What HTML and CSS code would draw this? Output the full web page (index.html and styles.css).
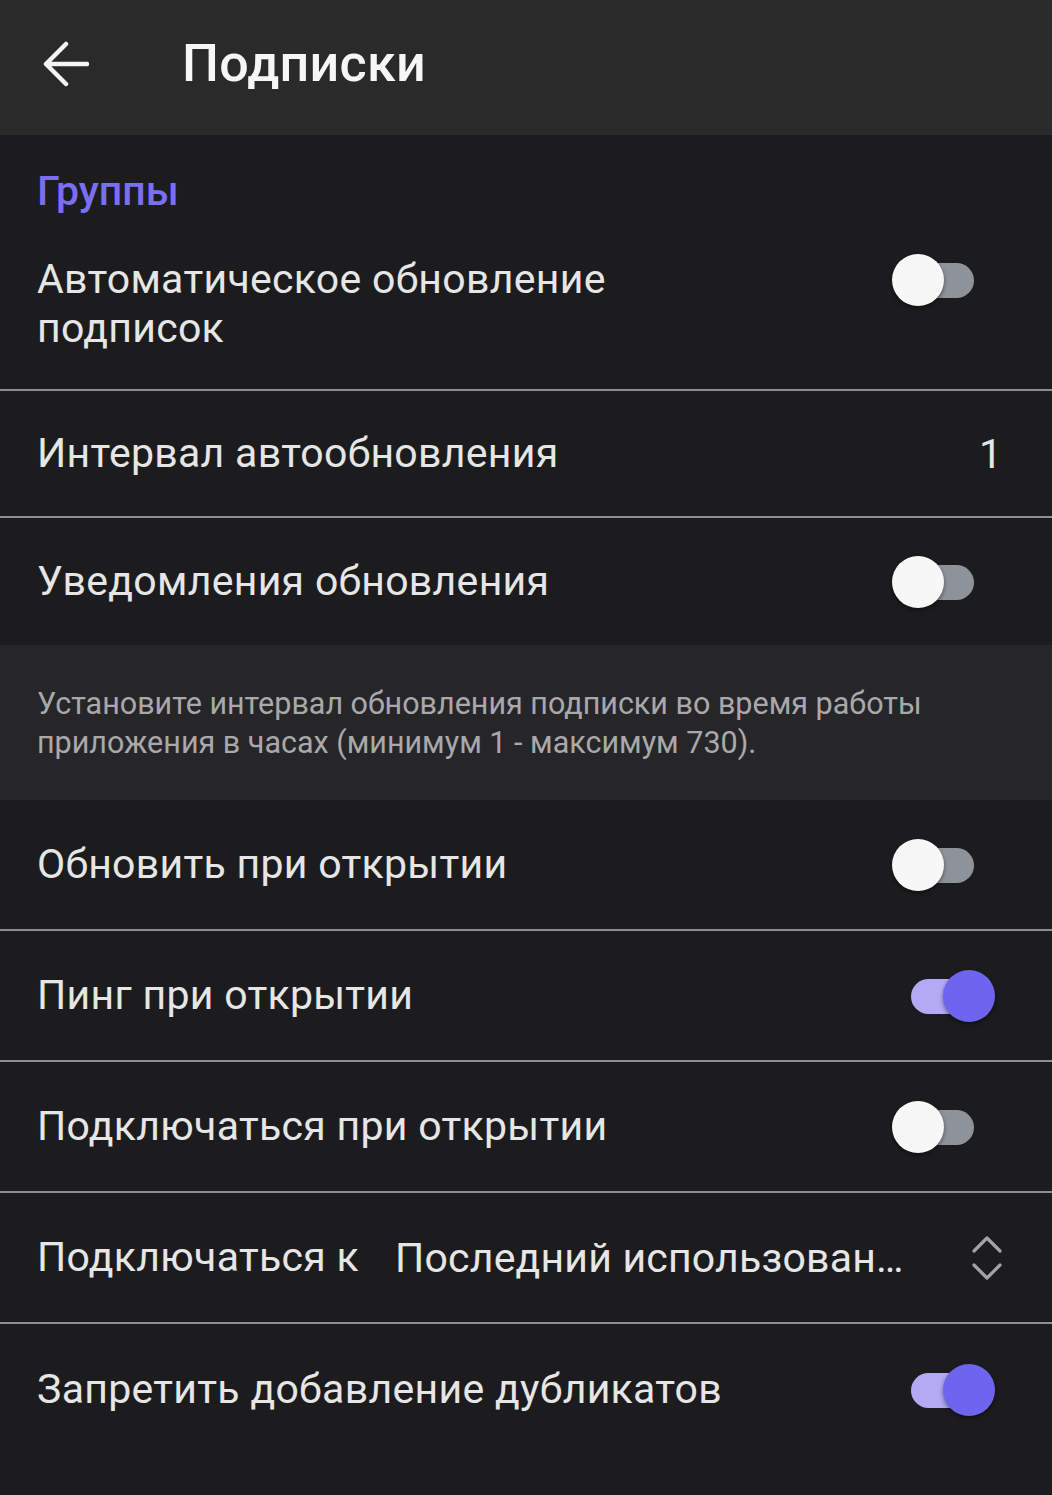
FILE: index.html
```html
<!DOCTYPE html>
<html lang="ru">
<head>
<meta charset="utf-8">
<title>Подписки</title>
<link rel="stylesheet" href="styles.css">
</head>
<body>
<header class="appbar">
  <svg class="back" width="46" height="46" viewBox="0 0 46 46" aria-hidden="true">
    <path d="M3 23 H44 M23 3 L3 23 L23 43" fill="none" stroke="#f4f4f4" stroke-width="4.5" stroke-linecap="round" stroke-linejoin="round"/>
  </svg>
  <h1 class="title">Подписки</h1>
</header>

<main class="content">
  <section class="group group-top">
    <div class="group-title">Группы</div>

    <div class="row row-first divided">
      <div class="label">Автоматическое обновление<br>подписок</div>
      <div class="switch switch-top"><span class="track"></span><span class="thumb"></span></div>
    </div>

    <div class="row divided">
      <div class="label">Интервал автообновления</div>
      <div class="value">1</div>
    </div>

    <div class="row">
      <div class="label">Уведомления обновления</div>
      <div class="switch"><span class="track"></span><span class="thumb"></span></div>
    </div>
  </section>

  <div class="hint">Установите интервал обновления подписки во время работы приложения в часах (минимум 1 - максимум 730).</div>

  <section class="group group-bottom">
    <div class="row divided">
      <div class="label">Обновить при открытии</div>
      <div class="switch"><span class="track"></span><span class="thumb"></span></div>
    </div>

    <div class="row divided">
      <div class="label">Пинг при открытии</div>
      <div class="switch on"><span class="track"></span><span class="thumb"></span></div>
    </div>

    <div class="row divided">
      <div class="label">Подключаться при открытии</div>
      <div class="switch"><span class="track"></span><span class="thumb"></span></div>
    </div>

    <div class="row divided">
      <div class="label select-label">Подключаться к</div>
      <div class="select-value">Последний использован…</div>
      <svg class="chevrons" width="32" height="50" viewBox="0 0 32 50" aria-hidden="true">
        <path d="M3 18 L16 5 L29 18 M3 32 L16 45 L29 32" fill="none" stroke="#a3a3a6" stroke-width="3.2" stroke-linecap="round" stroke-linejoin="round"/>
      </svg>
    </div>

    <div class="row">
      <div class="label">Запретить добавление дубликатов</div>
      <div class="switch on"><span class="track"></span><span class="thumb"></span></div>
    </div>
  </section>
</main>
</body>
</html>
```

FILE: styles.css
```css
* {
  box-sizing: border-box;
}

html, body {
  margin: 0;
  padding: 0;
}

body {
  background: #1c1c1e;
  font-family: Roboto, "Noto Sans", "Liberation Sans", sans-serif;
  color: #e8e8e8;
  width: 1052px;
  min-height: 1495px;
}

.appbar {
  height: 135px;
  background: #2a2a2b;
  display: flex;
  align-items: center;
  padding: 0 0 8px 43px;
}

.back {
  display: block;
}

.title {
  margin: 0 0 0 93px;
  font-size: 52px;
  font-weight: 500;
  color: #f6f6f6;
  letter-spacing: 0.3px;
}

.group-title {
  padding: 32px 37px 0;
  height: 76px;
  line-height: 48px;
  font-size: 41px;
  font-weight: 500;
  color: #7a6ff2;
}

.row {
  display: flex;
  align-items: center;
  padding: 0 57px 0 37px;
}

.group-top .row {
  min-height: 127px;
}

.group-bottom .row {
  min-height: 131px;
}

.group-top .row-first {
  min-height: 180px;
  padding-top: 8px;
}

.divided {
  border-bottom: 2px solid #8d8d90;
}

.label {
  flex: 1;
  font-size: 41px;
  line-height: 49px;
  color: #e6e6e6;
  letter-spacing: 0.3px;
}

.value {
  font-size: 41px;
  color: #e6e6e6;
  margin-right: -7px;
}

.hint {
  background: #262628;
  height: 155px;
  padding: 0 37px;
  display: flex;
  align-items: center;
  font-size: 30.5px;
  line-height: 39px;
  color: #a9a9ab;
}

.switch {
  position: relative;
  width: 103px;
  height: 52px;
  flex: none;
}

.switch-top {
  align-self: flex-start;
  margin-top: 35px;
}

.switch .track {
  position: absolute;
  left: 19px;
  top: 9px;
  width: 63px;
  height: 35px;
  border-radius: 18px;
  background: #8e939a;
}

.switch .thumb {
  position: absolute;
  left: 0;
  top: 0;
  width: 52px;
  height: 52px;
  border-radius: 50%;
  background: #f7f7f7;
  box-shadow: 0 2px 4px rgba(0, 0, 0, 0.45);
}

.switch.on .track {
  background: #b2abf4;
}

.switch.on .thumb {
  left: 51px;
  background: #6f64f0;
}

.select-label {
  flex: none;
}

.select-value {
  flex: 1;
  margin-left: 36px;
  font-size: 41px;
  color: #e6e6e6;
  letter-spacing: 0.2px;
  white-space: nowrap;
  overflow: hidden;
}

.chevrons {
  flex: none;
  display: block;
  margin-right: -8px;
}
```
